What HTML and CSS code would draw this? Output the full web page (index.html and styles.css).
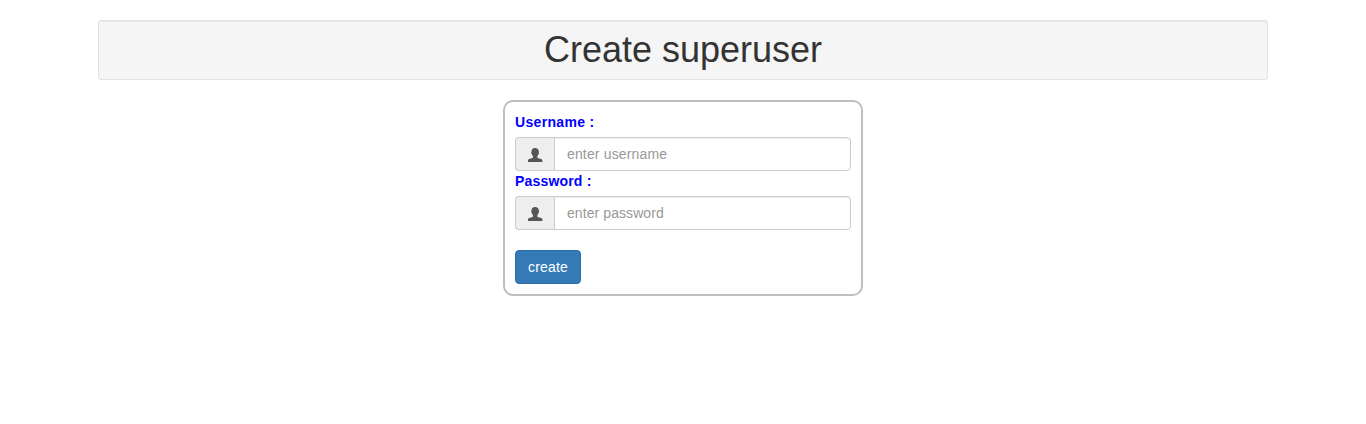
FILE: index.html
```html
<!DOCTYPE html>
<html lang="en">
<head>
<meta charset="utf-8">
<title>Create superuser</title>
<link rel="stylesheet" href="styles.css">
</head>
<body>
<main class="container">
  <header class="well"><h1 class="title">Create superuser</h1></header>
  <form class="panel">
    <label class="label label-username" for="username">Username :</label>
    <div class="input-group">
      <span class="addon"><svg class="icon" viewBox="0 0 14 14"><path d="M7 0C4.6 0 3.5 1.4 3.5 3.4V4.2C3.1 4.5 3.2 5.6 3.8 6C4 7 4.4 7.8 5 8.3V9.4C4.6 10 3.5 10.2 2 10.7C.7 11.1 0 11.7 0 12.7V14H14.4V12.7C14.4 11.7 13.6 11.1 12.3 10.7C10.8 10.2 9.7 10 9.3 9.4V8.3C9.9 7.8 10.3 7 10.5 6C11.1 5.6 11.2 4.5 10.8 4.2V3.4C10.8 1.4 9.4 0 7 0Z"/></svg></span>
      <input class="control control-username" id="username" type="text" placeholder="enter username">
    </div>
    <label class="label label-password" for="password">Password :</label>
    <div class="input-group">
      <span class="addon"><svg class="icon" viewBox="0 0 14 14"><path d="M7 0C4.6 0 3.5 1.4 3.5 3.4V4.2C3.1 4.5 3.2 5.6 3.8 6C4 7 4.4 7.8 5 8.3V9.4C4.6 10 3.5 10.2 2 10.7C.7 11.1 0 11.7 0 12.7V14H14.4V12.7C14.4 11.7 13.6 11.1 12.3 10.7C10.8 10.2 9.7 10 9.3 9.4V8.3C9.9 7.8 10.3 7 10.5 6C11.1 5.6 11.2 4.5 10.8 4.2V3.4C10.8 1.4 9.4 0 7 0Z"/></svg></span>
      <input class="control control-password" id="password" type="password" placeholder="enter password">
    </div>
    <button class="button" type="button">create</button>
  </form>
</main>
</body>
</html>
```

FILE: styles.css
```css
* { box-sizing: border-box; }
body {
  margin: 0;
  background: #fff;
  color: #333;
  font: 14px/20px "Liberation Sans", Arial, sans-serif;
}
.container { width: 1170px; margin: 0 auto; padding-top: 20px; }
.well {
  height: 60px;
  margin-bottom: 20px;
  padding: 9px;
  background: #f5f5f5;
  border: 1px solid #e3e3e3;
  border-radius: 3px;
  box-shadow: inset 0 1px 1px rgba(0, 0, 0, .05);
}
.title { margin: 0; font-size: 36px; font-weight: 500; line-height: 39.6px; text-align: center; }
.panel {
  width: 360px;
  height: 196px;
  margin: 0 auto;
  padding: 10px;
  border: 2px solid #c2bebf;
  border-radius: 10px;
}
.label { display: block; margin-bottom: 5px; color: #00f; font-weight: 700; }
.label-username { letter-spacing: .32px; }
.label-password { letter-spacing: .18px; }
.input-group { display: flex; height: 34px; }
.addon {
  display: flex;
  flex: 0 0 39px;
  align-items: center;
  justify-content: center;
  padding-top: 2px;
  background: #eee;
  border: 1px solid #ccc;
  border-right: 0;
  border-radius: 4px 0 0 4px;
}
.icon { width: 14px; height: 14px; fill: #555; overflow: visible; }
.control {
  flex: 1;
  min-width: 0;
  padding: 6px 12px;
  color: #555;
  font: inherit;
  background: #fff;
  border: 1px solid #ccc;
  border-radius: 0 4px 4px 0;
  box-shadow: inset 0 1px 1px rgba(0, 0, 0, .075);
}
.control::placeholder { color: #999; opacity: 1; }
.control-username { letter-spacing: .15px; }
.control-password { letter-spacing: .08px; }
.button {
  width: 66px;
  height: 34px;
  margin-top: 20px;
  padding: 6px 12px;
  color: #fff;
  font: inherit;
  letter-spacing: .15px;
  background: #337ab7;
  border: 1px solid #2e6da4;
  border-radius: 4px;
}
```
